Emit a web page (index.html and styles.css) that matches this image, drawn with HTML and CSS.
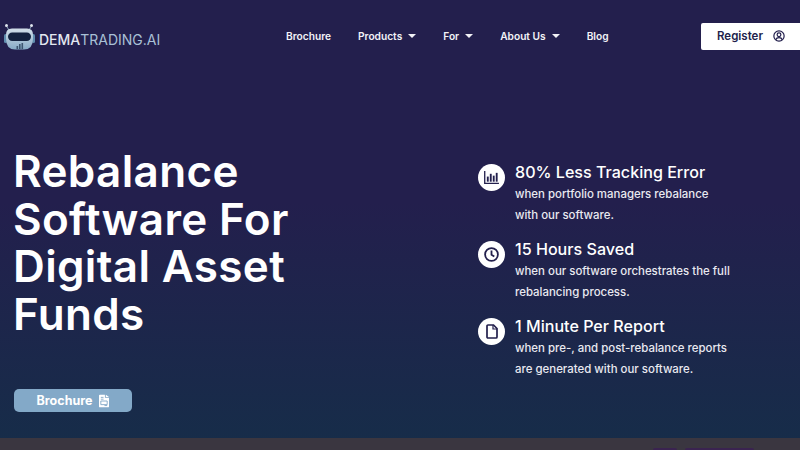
FILE: index.html
```html
<!DOCTYPE html>
<html lang="en">
<head>
<meta charset="utf-8">
<title>DemaTrading.ai</title>
<link rel="stylesheet" href="styles.css">
</head>
<body>
<div class="page">
  <header class="top">
    <a class="logo">
      <svg class="logo-mark" width="32" height="27" viewBox="0 0 32 27">
        <defs>
          <linearGradient id="head" x1="0" y1="0" x2="0" y2="1">
            <stop offset="0" stop-color="#d3dfe9"/>
            <stop offset="1" stop-color="#86aac6"/>
          </linearGradient>
        </defs>
        <circle cx="2.5" cy="1.6" r="1.5" fill="#dfe6ee"/>
        <circle cx="27.5" cy="1.6" r="1.5" fill="#dfe6ee"/>
        <path d="M3 3l2 3M27 3l-2 3" stroke="#8fa9c0" stroke-width="1"/>
        <rect x="0" y="10" width="3" height="9" rx="1.5" fill="#5f8cae"/>
        <rect x="28" y="10" width="3" height="9" rx="1.5" fill="#5f8cae"/>
        <path d="M8 4.5h15q6 0 6 6v4q0 11-9 11h-9q-9 0-9-11v-4q0-6 6-6z" fill="url(#head)"/>
        <rect x="4" y="8.5" width="23" height="8.5" rx="4.2" fill="#14223f"/>
        <path d="M12.5 25v-3h1.6v3zM15 25v-5h1.6v5zM17.5 25v-6h1.6v6z" fill="#3d5570"/>
      </svg>
      <span class="logo-text"><span class="logo-a">DEMA</span><span class="logo-b">TRADING.AI</span></span>
    </a>
    <nav class="nav">
      <a class="nav-item">Brochure</a>
      <a class="nav-item">Products<i class="caret"></i></a>
      <a class="nav-item">For<i class="caret"></i></a>
      <a class="nav-item">About Us<i class="caret"></i></a>
      <a class="nav-item">Blog</a>
    </nav>
    <a class="register">Register
      <svg width="12" height="12" viewBox="0 0 14 14" fill="none" stroke="#221f4c" stroke-width="1.4">
        <circle cx="7" cy="7" r="6"/>
        <circle cx="7" cy="5.6" r="2.2"/>
        <path d="M3.2 11.4c.6-1.8 2-2.4 3.8-2.4s3.2.6 3.8 2.4"/>
      </svg>
    </a>
  </header>
  <main class="hero">
    <div class="hero-left">
      <h1 class="title">Rebalance Software For Digital Asset Funds</h1>
      <a class="cta">Brochure
        <svg width="10" height="14" viewBox="0 0 11 14">
          <path d="M0 1q0-1 1-1h5.5v3.5H11V13q0 1-1 1H1q-1 0-1-1z" fill="#fff"/>
          <path d="M7.5 0L11 2.6H7.5z" fill="#fff"/>
          <path d="M2 3h3M2 5h3M2 7h7v4H2zM6 12h3" stroke="#83a9c8" stroke-width="1" fill="none"/>
        </svg>
      </a>
    </div>
    <ul class="stats">
      <li class="stat">
        <span class="badge">
          <svg width="15" height="13" viewBox="0 0 16 14" fill="#221f4c">
            <path d="M0 0h1.4v12.6H16V14H0z"/>
            <rect x="3" y="6" width="2" height="5.5"/><rect x="6.2" y="3" width="2" height="8.5"/><rect x="9.4" y="5" width="2" height="6.5"/><rect x="12.6" y="2" width="2" height="9.5"/>
          </svg>
        </span>
        <div class="stat-body">
          <h3 class="stat-title">80% Less Tracking Error</h3>
          <p class="stat-text">when portfolio managers rebalance<br>with our software.</p>
        </div>
      </li>
      <li class="stat">
        <span class="badge">
          <svg width="15" height="15" viewBox="0 0 15 15" fill="none" stroke="#221f4c" stroke-width="1.8">
            <circle cx="7.5" cy="7.5" r="6.4"/>
            <path d="M7.5 3.6v4.2l2.8 1.7"/>
          </svg>
        </span>
        <div class="stat-body">
          <h3 class="stat-title">15 Hours Saved</h3>
          <p class="stat-text">when our software orchestrates the full<br>rebalancing process.</p>
        </div>
      </li>
      <li class="stat">
        <span class="badge">
          <svg width="12" height="15" viewBox="0 0 12 15" fill="none" stroke="#221f4c" stroke-width="1.7">
            <path d="M1 2q0-1 1-1h5.5L11 4.5V13q0 1-1 1H2q-1 0-1-1z"/>
            <path d="M7 1v4h4" stroke-width="1.2"/>
          </svg>
        </span>
        <div class="stat-body">
          <h3 class="stat-title">1 Minute Per Report</h3>
          <p class="stat-text">when pre-, and post-rebalance reports<br>are generated with our software.</p>
        </div>
      </li>
    </ul>
  </main>
  <footer class="strip">
    <span class="tab tab-a"></span>
    <span class="tab tab-b"></span>
  </footer>
</div>
</body>
</html>
```

FILE: styles.css
```css
* { box-sizing: border-box; }
html, body { margin: 0; padding: 0; }
body { width: 800px; height: 450px; overflow: hidden; font-family: Inter, "Open Sans", sans-serif; color: #fff; }
.page { width: 800px; height: 450px; display: flex; flex-direction: column; background: linear-gradient(180deg, #231f4d 0%, #231f4d 45%, #162d49 100%); }

.top { height: 72px; display: flex; align-items: flex-start; padding-top: 23px; flex: none; }
.logo { width: 284px; display: flex; align-items: center; gap: 3px; padding-left: 4px; height: 28px; }
.logo-mark { flex: none; }
.logo-text { font-size: 14px; font-weight: 400; white-space: nowrap; padding-top: 5px; }
.logo-a { color: #e3e8f0; font-weight: 500; }
.logo-b { color: #a9c0d6; }

.nav { width: 417px; display: flex; align-items: center; gap: 27px; padding-left: 2px; height: 26px; font-size: 10.2px; font-weight: 600; color: #f2f2f6; }
.nav-item { display: flex; align-items: center; white-space: nowrap; }
.caret { display: block; width: 0; height: 0; margin-left: 6px; border-left: 4px solid transparent; border-right: 4px solid transparent; border-top: 4px solid #f2f2f6; }

.register { width: 99px; height: 27px; background: #fff; border-radius: 2px 0 0 2px; color: #221f4c; font-size: 11.5px; font-weight: 600; display: flex; align-items: center; gap: 10px; padding-left: 16px; padding-bottom: 2px; }

.hero { flex: 1; display: flex; min-height: 0; }
.hero-left { width: 478px; padding: 76px 0 0 13px; display: flex; flex-direction: column; }
.title { margin: 0; width: 310px; font-size: 44px; line-height: 47.7px; font-weight: 600; letter-spacing: 0.35px; color: #fff; }
.cta { margin: 50px 0 0 1px; width: 118px; height: 23px; padding-top: 1px; border-radius: 5px; background: #83a9c8; display: flex; align-items: center; justify-content: center; gap: 7px; font-size: 12.5px; font-weight: 700; color: #fff; }

.stats { list-style: none; margin: 0; padding: 88px 0 0; display: flex; flex-direction: column; gap: 12px; }
.stat { display: flex; gap: 10px; }
.badge { flex: none; width: 27px; height: 27px; margin-top: 4px; border-radius: 50%; background: #fff; display: flex; align-items: center; justify-content: center; }
.stat-title { margin: 0; font-size: 16.1px; line-height: 24px; font-weight: 500; color: #fff; white-space: nowrap; }
.stat-text { margin: 0; font-size: 11.45px; line-height: 20.5px; font-weight: 500; color: #e9e9f0; white-space: nowrap; }

.strip { flex: none; height: 12px; background: #3a3640; display: flex; padding: 10px 0 0 653px; gap: 8px; }
.tab { display: block; height: 2px; background: #3a2350; border-radius: 2px 2px 0 0; }
.tab-a { width: 24px; }
.tab-b { width: 69px; }
```
